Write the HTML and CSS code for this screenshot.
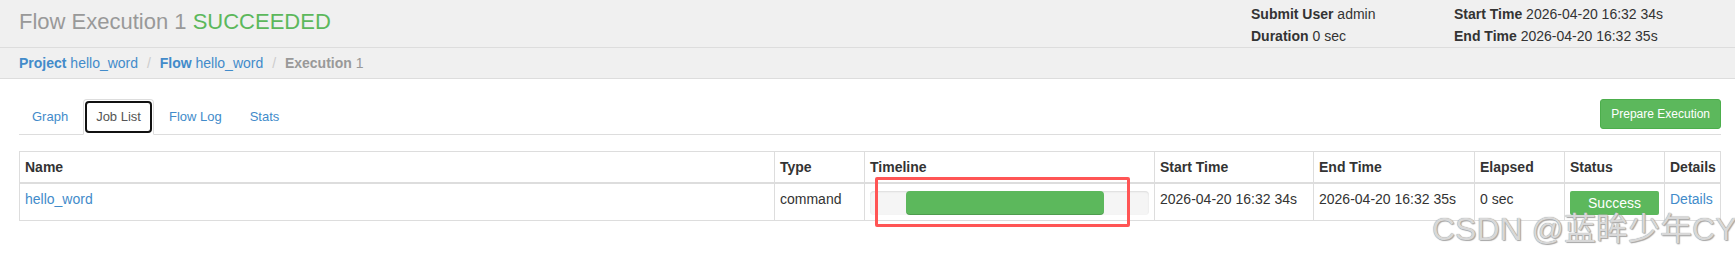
FILE: index.html
```html
<!DOCTYPE html>
<html lang="en">
<head>
    <meta charset="UTF-8">
    <meta name="viewport" content="width=device-width, initial-scale=1.0">
    <title>Flow Execution 1</title>
    <link rel="stylesheet" href="styles.css">
</head>
<body>
    <div class="page-header">
        <h1 class="title">Flow Execution 1 <span class="state">SUCCEEDED</span></h1>
        <div class="meta">
            <div><b>Submit User</b> admin</div>
            <div><b>Start Time</b> 2026-04-20 16:32 34s</div>
            <div><b>Duration</b> 0 sec</div>
            <div><b>End Time</b> 2026-04-20 16:32 35s</div>
        </div>
    </div>

    <div class="crumbs">
        <a href="#"><b>Project</b> hello_word</a>
        <span class="sep">/</span>
        <a href="#"><b>Flow</b> hello_word</a>
        <span class="sep">/</span>
        <span class="current"><b>Execution</b> 1</span>
    </div>

    <div class="content">
        <div class="tabbar">
            <div class="tabs">
                <a href="#">Graph</a>
                <a href="#" class="active">Job List</a>
                <a href="#">Flow Log</a>
                <a href="#">Stats</a>
            </div>
            <button class="btn-run">Prepare Execution</button>
        </div>

        <table class="jobs">
            <colgroup>
                <col style="width: 755px">
                <col style="width: 90px">
                <col style="width: 290px">
                <col style="width: 159px">
                <col style="width: 161px">
                <col style="width: 90px">
                <col style="width: 100px">
                <col>
            </colgroup>
            <thead>
                <tr>
                    <th>Name</th>
                    <th>Type</th>
                    <th>Timeline</th>
                    <th>Start Time</th>
                    <th>End Time</th>
                    <th>Elapsed</th>
                    <th>Status</th>
                    <th>Details</th>
                </tr>
            </thead>
            <tbody>
                <tr>
                    <td><a href="#">hello_word</a></td>
                    <td>command</td>
                    <td>
                        <div class="progress">
                            <div class="progress-bar" style="margin-left: 12.9%; width: 71%"></div>
                        </div>
                    </td>
                    <td>2026-04-20 16:32 34s</td>
                    <td>2026-04-20 16:32 35s</td>
                    <td>0 sec</td>
                    <td><div class="status-ok">Success</div></td>
                    <td><a href="#">Details</a></td>
                </tr>
            </tbody>
        </table>
    </div>

    <div class="annot"></div>
    <div class="watermark">CSDN @蓝眸少年CY</div>
</body>
</html>
```

FILE: styles.css
```css
body {
    margin: 0;
    font-family: "Liberation Sans", Arial, sans-serif;
    font-size: 14px;
    line-height: 20px;
    color: #333;
    background-color: #fff;
    position: relative;
    height: 259px;
    overflow: hidden;
}

a {
    color: #428bca;
    text-decoration: none;
}

.page-header {
    display: flex;
    height: 47px;
    padding-left: 19px;
    background-color: #f0f0f0;
    border-bottom: 1px solid #ddd;
}

.title {
    flex: 1;
    margin: 0;
    padding-top: 10px;
    font-size: 22px;
    line-height: 24px;
    font-weight: normal;
    color: #999;
}

.title .state {
    color: #5cb85c;
}

.meta {
    display: grid;
    grid-template-columns: 203px 1fr;
    width: 484px;
    padding-top: 4px;
    line-height: 20px;
}

.crumbs {
    padding: 5px 19px;
    background-color: #f0f0f0;
    border-bottom: 1px solid #ddd;
}

.crumbs .sep {
    margin: 0 5px;
    color: #ccc;
}

.crumbs .current {
    color: #999;
}

.content {
    padding: 20px 14px 0 19px;
}

.tabbar {
    display: flex;
    align-items: flex-start;
    border-bottom: 1px solid #ddd;
}

.tabs {
    display: flex;
}

.tabs a {
    position: relative;
    padding: 8px 12px;
    margin-right: 2px;
    margin-bottom: -1px;
    font-size: 13px;
    line-height: 18px;
    border: 1px solid transparent;
    border-radius: 4px 4px 0 0;
}

.tabs a.active {
    color: #555;
    background-color: #fff;
    border-color: #ddd #ddd transparent;
}

.tabs a.active::after {
    content: "";
    position: absolute;
    left: 1px;
    right: 1px;
    top: 1px;
    bottom: 1px;
    border: 2px solid #111;
    border-radius: 4px;
}

.btn-run {
    margin-left: auto;
    padding: 5px 10px;
    font-family: inherit;
    font-size: 12px;
    line-height: 18px;
    color: #fff;
    background-color: #5cb85c;
    border: 1px solid #4cae4c;
    border-radius: 3px;
}

.jobs {
    width: 100%;
    margin-top: 16px;
    table-layout: fixed;
    border-collapse: collapse;
    border: 1px solid #ddd;
}

.jobs th, .jobs td {
    padding: 5px;
    text-align: left;
    vertical-align: top;
    border: 1px solid #ddd;
    white-space: nowrap;
}

.jobs thead th {
    border-bottom: 2px solid #ddd;
}

.progress {
    height: 24px;
    margin-top: 2px;
    background-color: #f5f5f5;
    border-radius: 4px;
    box-shadow: inset 0 1px 2px rgba(0, 0, 0, 0.1);
}

.progress-bar {
    height: 100%;
    background-color: #5cb85c;
    border-radius: 4px;
    box-shadow: inset 0 -1px 0 rgba(0, 0, 0, 0.15);
}

.status-ok {
    height: 24px;
    margin-top: 2px;
    line-height: 24px;
    text-align: center;
    color: #fff;
    background-color: #5cb85c;
    border-radius: 2px;
}

.annot {
    position: absolute;
    left: 875px;
    top: 177px;
    width: 255px;
    height: 50px;
    box-sizing: border-box;
    border: 3px solid #f55;
    border-radius: 2px;
}

.watermark {
    position: absolute;
    left: 1432px;
    top: 213px;
    font-family: "Liberation Sans", "Noto Sans CJK SC", sans-serif;
    font-size: 32px;
    line-height: 32px;
    white-space: nowrap;
    color: #d8d8d8;
    text-shadow: 0 0 1px #888, 1px 1px 1px #aaa;
}
```
